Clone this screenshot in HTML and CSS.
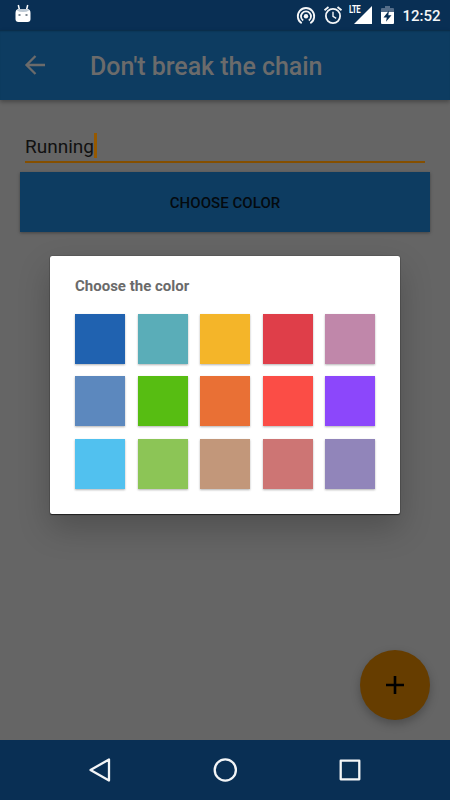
FILE: index.html
```html
<!DOCTYPE html>
<html lang="en">
<head>
<meta charset="utf-8">
<title>Don't break the chain</title>
<link rel="stylesheet" href="styles.css">
</head>
<body>
<div class="screen">
  <header class="status">
    <svg class="android" width="16" height="18" viewBox="0 0 16 18"><path d="M3.300 0l1.200 5M12.700 0l-1.200 5" stroke="#fff" stroke-width="1.500"/><path d="M.5 8Q.5 4 4 4h8q3.500 0 3.500 4v6q0 3-3 3h-9q-3 0-3-3z" fill="#fff"/><path d="M2 5.500Q3 4 5 4h6q2 0 3 1.500-2 1.500-6 1.500T2 5.500z" fill="#bdc9d4"/><path d="M3.500 9h2v2h-2zM10.500 9h2v2h-2z" fill="#7d8791"/></svg>
    <div class="tray">
      <svg class="cast" width="20" height="20" viewBox="0 0 20 20" fill="none" stroke="#f4f6f8" stroke-width="1.800"><path d="M5.700 17.200a8.200 8.200 0 1 1 8.600 0"/><path d="M7.200 14.500a5 5 0 1 1 5.600 0"/><circle cx="10" cy="10.300" r="2.200" fill="#f4f6f8" stroke="none"/></svg>
      <svg class="alarm" width="20" height="20" viewBox="0 0 20 20" fill="none" stroke="#f4f6f8" stroke-width="1.800"><circle cx="10" cy="11" r="7.100"/><path d="M1.500 5.300L5.500 2M18.500 5.300L14.500 2"/><path d="M10 6.800v4.500l3.200 2" stroke-width="1.400"/></svg>
      <div class="signal"><span class="lte">LTE</span><svg width="18" height="18" viewBox="0 0 18 18"><path d="M18 0v18H0z" fill="#fff"/></svg></div>
      <svg class="battery" width="13" height="18" viewBox="0 0 13 18"><path d="M1 2h3V0h5v2h3q1 0 1 1v4H0V3q0-1 1-1z" fill="#546d89"/><path d="M0 6h13v11q0 1-1 1H1q-1 0-1-1z" fill="#fff"/><path d="M8 4.500L2.500 11.500h3.300L5 15.800l5.500-6.500H7.300z" fill="#092f54"/></svg>
      <span class="clock">12:52</span>
    </div>
  </header>
  <div class="appbar">
    <svg width="20" height="20" viewBox="0 0 20 20" fill="none" stroke="#6b6b6b" stroke-width="2.300"><path d="M20 10H2M10.500 1L1.500 10l9 9"/></svg>
    <h1 class="title">Don't break the chain</h1>
  </div>
  <main class="content">
    <div class="field"><span>Running</span><i class="caret"></i></div>
    <div class="choose">CHOOSE COLOR</div>
    <div class="fab"><svg width="18" height="18" viewBox="0 0 18 18" stroke="#000" stroke-width="2.600"><path d="M9 0v18M0 9h18"/></svg></div>
  </main>
  <nav class="nav">
    <svg width="24" height="26" viewBox="0 0 24 26" fill="none" stroke="#f3f5f7" stroke-width="2.300" stroke-linejoin="round"><path d="M21 2.500v21L2.500 13z"/></svg>
    <svg width="24" height="24" viewBox="0 0 24 24" fill="none" stroke="#f3f5f7" stroke-width="2.300"><circle cx="11.300" cy="12" r="10.600"/></svg>
    <svg width="22" height="22" viewBox="0 0 22 22" fill="none" stroke="#f3f5f7" stroke-width="2.300" stroke-linejoin="round"><path d="M1.700 1.700h18.600v18.600H1.700z"/></svg>
  </nav>
  <section class="dialog">
    <h2 class="heading">Choose the color</h2>
    <div class="palette">
      <i class="swatch royal"></i><i class="swatch teal"></i><i class="swatch amber"></i><i class="swatch crimson"></i><i class="swatch mauve"></i>
      <i class="swatch steel"></i><i class="swatch green"></i><i class="swatch orange"></i><i class="swatch red"></i><i class="swatch violet"></i>
      <i class="swatch sky"></i><i class="swatch lime"></i><i class="swatch tan"></i><i class="swatch rose"></i><i class="swatch lavender"></i>
    </div>
  </section>
</div>
</body>
</html>
```
FILE: styles.css
```css
* { box-sizing: border-box; }
body { margin: 0; font-family: Roboto, sans-serif; }
svg { display: block; flex: none; overflow: visible; }
.screen {
  position: relative;
  display: flex;
  flex-direction: column;
  width: 450px;
  height: 800px;
  overflow: hidden;
  background: #656565;
}
.status {
  display: flex;
  justify-content: space-between;
  height: 30px;
  padding: 0 9.5px 0 14.5px;
  background: #092f54;
}
.android { margin-top: 5px; }
.tray { display: flex; align-items: flex-start; }
.cast { margin: 6px 7px 0 0; }
.alarm { margin: 5px 6px 0 0; }
.signal { position: relative; width: 23px; padding: 6px 0 0 5px; margin-right: 9.5px; }
.lte {
  position: absolute;
  left: 0.5px;
  top: 4px;
  font-size: 10px;
  line-height: 12px;
  font-weight: 700;
  letter-spacing: -0.5px;
  transform: scaleX(0.77);
  transform-origin: left;
  color: #fff;
}
.battery { margin: 6px 8.5px 0 0; }
.clock { font-size: 15px; line-height: 32px; font-weight: 500; color: #f4f6f8; width: 38px; white-space: nowrap; }
.appbar {
  position: relative;
  display: flex;
  align-items: center;
  height: 70px;
  padding-left: 25px;
  background: #0d3c61;
  box-shadow: 0 2px 4px rgba(0, 0, 0, 0.3), inset 0 2px 2px -1px rgba(0, 0, 0, 0.3);
}
.title { margin: 2px 0 0 45px; font-size: 25px; font-weight: 500; letter-spacing: -0.04px; color: #6b6b6b; white-space: nowrap; }
.content { position: relative; flex: 1; padding: 33px 20px 0; }
.field {
  display: flex;
  align-items: flex-start;
  height: 30px;
  margin: 0 5px 9px;
  border-bottom: 2px solid #854f00;
  font-size: 19px;
  line-height: 28px;
  color: #111;
}
.caret { width: 3px; height: 25px; background: #965900; }
.choose {
  height: 60px;
  line-height: 62px;
  text-align: center;
  font-size: 15px;
  font-weight: 500;
  letter-spacing: 0.05px;
  color: #040a0f;
  background: #0d3c61;
  box-shadow: 0 1px 3px rgba(0, 0, 0, 0.35);
}
.fab {
  position: absolute;
  right: 20px;
  bottom: 20px;
  display: grid;
  place-items: center;
  width: 70px;
  height: 70px;
  border-radius: 50%;
  background: #663d00;
  box-shadow: 0 4px 10px rgba(0, 0, 0, 0.25);
}
.nav {
  display: flex;
  justify-content: space-between;
  align-items: center;
  height: 60px;
  padding: 0 89px 0 88px;
  background: #092f54;
}
.dialog {
  position: absolute;
  left: 50px;
  top: 256px;
  width: 350px;
  height: 258px;
  padding: 20px 25px 25px;
  border-radius: 2px;
  background: #fff;
  box-shadow: 0 1px 1px rgba(0, 0, 0, 0.6), 0 0 1px #000, 0 14px 32px rgba(0, 0, 0, 0.22);
}
.heading { margin: 0 0 17.7px; font-size: 15px; line-height: 20px; font-weight: 700; color: #6a6a6a; }
.palette { display: grid; grid-template-columns: repeat(5, 50px); gap: 12.5px; }
.swatch { height: 50px; box-shadow: 0 1px 2px rgba(0, 0, 0, 0.3); }
.royal { background: #2062b0; }
.teal { background: #5aadb8; }
.amber { background: #f4b529; }
.crimson { background: #df3e49; }
.mauve { background: #c087aa; }
.steel { background: #5c88be; }
.green { background: #57bd12; }
.orange { background: #e97035; }
.red { background: #fb4d46; }
.violet { background: #8c47fb; }
.sky { background: #51c1ef; }
.lime { background: #8cc556; }
.tan { background: #c2977a; }
.rose { background: #cd7574; }
.lavender { background: #9185ba; }
```
